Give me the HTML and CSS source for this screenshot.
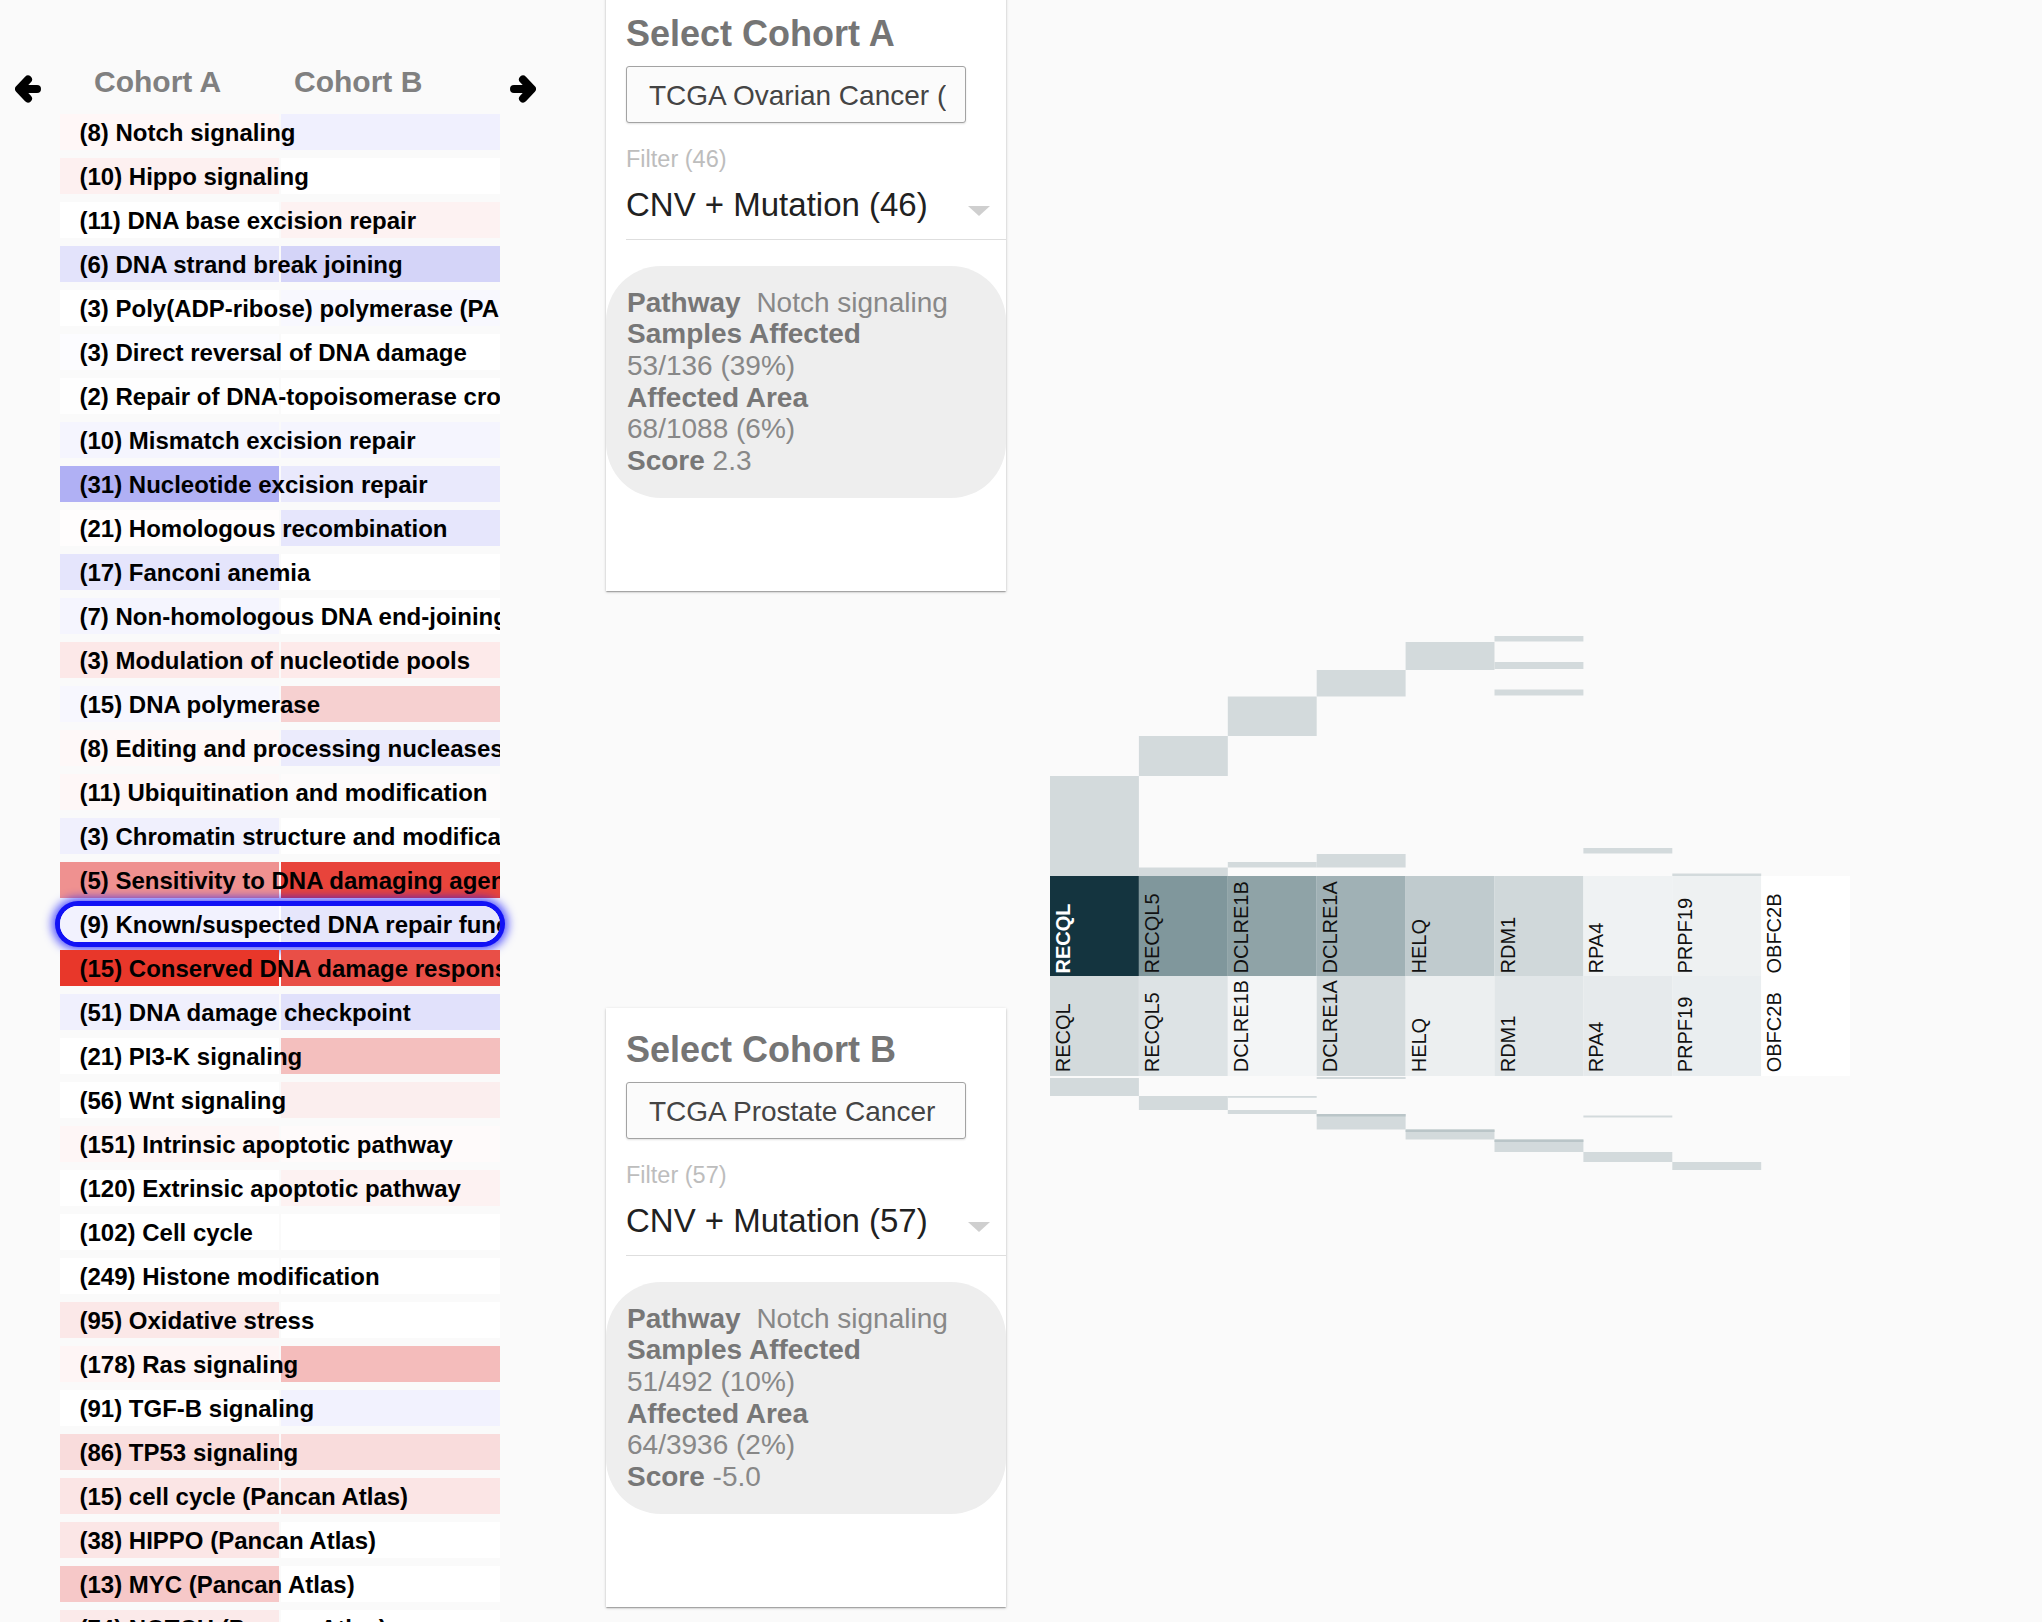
FILE: index.html
```html
<!DOCTYPE html>
<html lang="en">
<head>
<meta charset="utf-8">
<title>Pathway Comparison</title>
<link rel="stylesheet" href="styles.css">
</head>
<body>
<div class="app">
  <section class="pathways">
    <header class="pw-head">
      <svg class="arrow" viewBox="0 0 26 28" aria-label="previous"><path d="M22 14H4.5M13 4.5L4 14L13 23.5"/></svg>
      <span class="pw-head-label pw-head-label--a">Cohort A</span>
      <span class="pw-head-label pw-head-label--b">Cohort B</span>
      <svg class="arrow" viewBox="0 0 26 28" aria-label="next"><path d="M4 14H21.5M13 4.5L22 14L13 23.5"/></svg>
    </header>
    <ul class="pw-list">
      <li class="pw-row"><span class="pw-cell" style="background:#fff7f7"></span><span class="pw-cell" style="background:#f0f0fe"></span><span class="pw-label">(8) Notch signaling</span></li>
      <li class="pw-row"><span class="pw-cell" style="background:#fdf0f0"></span><span class="pw-cell" style="background:#ffffff"></span><span class="pw-label">(10) Hippo signaling</span></li>
      <li class="pw-row"><span class="pw-cell" style="background:#ffffff"></span><span class="pw-cell" style="background:#fdf2f2"></span><span class="pw-label">(11) DNA base excision repair</span></li>
      <li class="pw-row"><span class="pw-cell" style="background:#e3e3fb"></span><span class="pw-cell" style="background:#d4d4f8"></span><span class="pw-label">(6) DNA strand break joining</span></li>
      <li class="pw-row"><span class="pw-cell" style="background:#ffffff"></span><span class="pw-cell" style="background:#f8f8fe"></span><span class="pw-label">(3) Poly(ADP-ribose) polymerase (PARP) enzymes</span></li>
      <li class="pw-row"><span class="pw-cell" style="background:#fcfcff"></span><span class="pw-cell" style="background:#ffffff"></span><span class="pw-label">(3) Direct reversal of DNA damage</span></li>
      <li class="pw-row"><span class="pw-cell" style="background:#fefefe"></span><span class="pw-cell" style="background:#ffffff"></span><span class="pw-label">(2) Repair of DNA-topoisomerase crosslinks</span></li>
      <li class="pw-row"><span class="pw-cell" style="background:#f5f5fe"></span><span class="pw-cell" style="background:#f5f5fe"></span><span class="pw-label">(10) Mismatch excision repair</span></li>
      <li class="pw-row"><span class="pw-cell" style="background:#b0b0f4"></span><span class="pw-cell" style="background:#e9e9fc"></span><span class="pw-label">(31) Nucleotide excision repair</span></li>
      <li class="pw-row"><span class="pw-cell" style="background:#fffdfd"></span><span class="pw-cell" style="background:#e6e6fc"></span><span class="pw-label">(21) Homologous recombination</span></li>
      <li class="pw-row"><span class="pw-cell" style="background:#e5e5fc"></span><span class="pw-cell" style="background:#ffffff"></span><span class="pw-label">(17) Fanconi anemia</span></li>
      <li class="pw-row"><span class="pw-cell" style="background:#f5f5fe"></span><span class="pw-cell" style="background:#ffffff"></span><span class="pw-label">(7) Non-homologous DNA end-joining</span></li>
      <li class="pw-row"><span class="pw-cell" style="background:#fce8e8"></span><span class="pw-cell" style="background:#fdeaea"></span><span class="pw-label">(3) Modulation of nucleotide pools</span></li>
      <li class="pw-row"><span class="pw-cell" style="background:#f7f7fe"></span><span class="pw-cell" style="background:#f6d0d0"></span><span class="pw-label">(15) DNA polymerase</span></li>
      <li class="pw-row"><span class="pw-cell" style="background:#fef8f8"></span><span class="pw-cell" style="background:#ebebfc"></span><span class="pw-label">(8) Editing and processing nucleases</span></li>
      <li class="pw-row"><span class="pw-cell" style="background:#fef7f7"></span><span class="pw-cell" style="background:#fdfbfb"></span><span class="pw-label">(11) Ubiquitination and modification</span></li>
      <li class="pw-row"><span class="pw-cell" style="background:#f0f0fd"></span><span class="pw-cell" style="background:#ffffff"></span><span class="pw-label">(3) Chromatin structure and modification</span></li>
      <li class="pw-row"><span class="pw-cell" style="background:#ef9190"></span><span class="pw-cell" style="background:#e8443b"></span><span class="pw-label">(5) Sensitivity to DNA damaging agents</span></li>
      <li class="pw-row is-selected"><span class="pw-cell" style="background:#f2f2fe"></span><span class="pw-cell" style="background:#e6e6fb"></span><span class="pw-label">(9) Known/suspected DNA repair function</span></li>
      <li class="pw-row"><span class="pw-cell" style="background:#e8372a"></span><span class="pw-cell" style="background:#e94f47"></span><span class="pw-label">(15) Conserved DNA damage response</span></li>
      <li class="pw-row"><span class="pw-cell" style="background:#f0f0fd"></span><span class="pw-cell" style="background:#e1e1fb"></span><span class="pw-label">(51) DNA damage checkpoint</span></li>
      <li class="pw-row"><span class="pw-cell" style="background:#ffffff"></span><span class="pw-cell" style="background:#f4bfbe"></span><span class="pw-label">(21) PI3-K signaling</span></li>
      <li class="pw-row"><span class="pw-cell" style="background:#ffffff"></span><span class="pw-cell" style="background:#fbeeee"></span><span class="pw-label">(56) Wnt signaling</span></li>
      <li class="pw-row"><span class="pw-cell" style="background:#fef6f6"></span><span class="pw-cell" style="background:#fefafa"></span><span class="pw-label">(151) Intrinsic apoptotic pathway</span></li>
      <li class="pw-row"><span class="pw-cell" style="background:#ffffff"></span><span class="pw-cell" style="background:#fdf2f2"></span><span class="pw-label">(120) Extrinsic apoptotic pathway</span></li>
      <li class="pw-row"><span class="pw-cell" style="background:#ffffff"></span><span class="pw-cell" style="background:#ffffff"></span><span class="pw-label">(102) Cell cycle</span></li>
      <li class="pw-row"><span class="pw-cell" style="background:#ffffff"></span><span class="pw-cell" style="background:#ffffff"></span><span class="pw-label">(249) Histone modification</span></li>
      <li class="pw-row"><span class="pw-cell" style="background:#fbe8e8"></span><span class="pw-cell" style="background:#ffffff"></span><span class="pw-label">(95) Oxidative stress</span></li>
      <li class="pw-row"><span class="pw-cell" style="background:#fef5f5"></span><span class="pw-cell" style="background:#f4bcbb"></span><span class="pw-label">(178) Ras signaling</span></li>
      <li class="pw-row"><span class="pw-cell" style="background:#ffffff"></span><span class="pw-cell" style="background:#f2f2fe"></span><span class="pw-label">(91) TGF-B signaling</span></li>
      <li class="pw-row"><span class="pw-cell" style="background:#f9dcdc"></span><span class="pw-cell" style="background:#f9dcdc"></span><span class="pw-label">(86) TP53 signaling</span></li>
      <li class="pw-row"><span class="pw-cell" style="background:#fbe5e5"></span><span class="pw-cell" style="background:#fbe5e5"></span><span class="pw-label">(15) cell cycle (Pancan Atlas)</span></li>
      <li class="pw-row"><span class="pw-cell" style="background:#fbe6e6"></span><span class="pw-cell" style="background:#ffffff"></span><span class="pw-label">(38) HIPPO (Pancan Atlas)</span></li>
      <li class="pw-row"><span class="pw-cell" style="background:#f6c8c8"></span><span class="pw-cell" style="background:#ffffff"></span><span class="pw-label">(13) MYC (Pancan Atlas)</span></li>
      <li class="pw-row"><span class="pw-cell" style="background:#fbeaea"></span><span class="pw-cell" style="background:#ffffff"></span><span class="pw-label">(74) NOTCH (Pancan Atlas)</span></li>
    </ul>
  </section>

  <section class="cohorts">
    <div class="card">
      <h2 class="card-title">Select Cohort A</h2>
      <div class="cohort-input"><span class="cohort-input-text">TCGA Ovarian Cancer (OV)</span></div>
      <div class="filter-label">Filter (46)</div>
      <div class="filter-select"><span class="filter-value">CNV + Mutation (46)</span><span class="caret"></span></div>
      <div class="info">
        <div><b class="info-key">Pathway</b> Notch signaling</div>
        <div><b>Samples Affected</b></div>
        <div>53/136 (39%)</div>
        <div><b>Affected Area</b></div>
        <div>68/1088 (6%)</div>
        <div><b>Score</b> 2.3</div>
      </div>
    </div>
    <div class="card">
      <h2 class="card-title">Select Cohort B</h2>
      <div class="cohort-input"><span class="cohort-input-text">TCGA Prostate Cancer</span></div>
      <div class="filter-label">Filter (57)</div>
      <div class="filter-select"><span class="filter-value">CNV + Mutation (57)</span><span class="caret"></span></div>
      <div class="info">
        <div><b class="info-key">Pathway</b> Notch signaling</div>
        <div><b>Samples Affected</b></div>
        <div>51/492 (10%)</div>
        <div><b>Affected Area</b></div>
        <div>64/3936 (2%)</div>
        <div><b>Score</b> -5.0</div>
      </div>
    </div>
  </section>

  <section class="genes">
    <svg class="heatmap" viewBox="1040 630 820 560" width="820" height="560">
      <g class="bar">
        <rect x="1050" y="776" width="88.9" height="100"/>
        <rect x="1138.9" y="736" width="88.9" height="40"/>
        <rect x="1138.9" y="867.5" width="88.9" height="8.5"/>
        <rect x="1227.8" y="696.5" width="88.9" height="39.5"/>
        <rect x="1227.8" y="862" width="88.9" height="5.5"/>
        <rect x="1316.7" y="670" width="88.9" height="26.5"/>
        <rect x="1316.7" y="854" width="88.9" height="13.5"/>
        <rect x="1405.6" y="642" width="88.9" height="28"/>
        <rect x="1494.5" y="636" width="88.9" height="5.5"/>
        <rect x="1494.5" y="662" width="88.9" height="7"/>
        <rect x="1494.5" y="689.5" width="88.9" height="6"/>
        <rect x="1583.4" y="848" width="88.9" height="5.5"/>
        <rect x="1672.3" y="873.5" width="88.9" height="2.5"/>

        <rect x="1050" y="1078" width="88.9" height="18"/>
        <rect x="1138.9" y="1096" width="88.9" height="14"/>
        <rect x="1227.8" y="1096" width="88.9" height="1.8"/>
        <rect x="1227.8" y="1110" width="88.9" height="4"/>
        <rect x="1316.7" y="1077" width="88.9" height="2"/>
        <rect x="1316.7" y="1114" width="88.9" height="15.5"/>
        <rect x="1405.6" y="1129.5" width="88.9" height="10"/>
        <rect x="1494.5" y="1139.5" width="88.9" height="12.5"/>
        <rect x="1583.4" y="1115.5" width="88.9" height="2"/>
        <rect x="1583.4" y="1152" width="88.9" height="10"/>
        <rect x="1672.3" y="1162" width="88.9" height="8"/>
      </g>
      <g class="bar-edge">
        <rect x="1316.7" y="1114" width="88.9" height="2.5"/>
        <rect x="1405.6" y="1129.5" width="88.9" height="2.5"/>
        <rect x="1494.5" y="1139.5" width="88.9" height="2.5"/>
      </g>

      <rect x="1050" y="876" width="88.9" height="100" fill="#14343f"/>
      <rect x="1138.9" y="876" width="88.9" height="100" fill="#80979c"/>
      <rect x="1227.8" y="876" width="88.9" height="100" fill="#8fa3a7"/>
      <rect x="1316.7" y="876" width="88.9" height="100" fill="#a0b1b5"/>
      <rect x="1405.6" y="876" width="88.9" height="100" fill="#c0cbce"/>
      <rect x="1494.5" y="876" width="88.9" height="100" fill="#d0d8da"/>
      <rect x="1583.4" y="876" width="88.9" height="100" fill="#eff2f3"/>
      <rect x="1672.3" y="876" width="88.9" height="100" fill="#eef1f2"/>
      <rect x="1761.2" y="876" width="88.9" height="100" fill="#ffffff"/>

      <rect x="1050" y="976" width="88.9" height="100" fill="#d3dadc"/>
      <rect x="1138.9" y="976" width="88.9" height="100" fill="#dde3e5"/>
      <rect x="1227.8" y="976" width="88.9" height="100" fill="#f3f5f6"/>
      <rect x="1316.7" y="976" width="88.9" height="100" fill="#d4dbdd"/>
      <rect x="1405.6" y="976" width="88.9" height="100" fill="#eceff0"/>
      <rect x="1494.5" y="976" width="88.9" height="100" fill="#e1e6e8"/>
      <rect x="1583.4" y="976" width="88.9" height="100" fill="#e6eaec"/>
      <rect x="1672.3" y="976" width="88.9" height="100" fill="#eaeef0"/>
      <rect x="1761.2" y="976" width="88.9" height="100" fill="#ffffff"/>

      <g class="gene-label">
        <text class="gene-label--strong" transform="translate(1070 973.5) rotate(-90)">RECQL</text>
        <text transform="translate(1158.9 973.5) rotate(-90)">RECQL5</text>
        <text transform="translate(1247.8 973.5) rotate(-90)">DCLRE1B</text>
        <text transform="translate(1336.7 973.5) rotate(-90)">DCLRE1A</text>
        <text transform="translate(1425.6 973.5) rotate(-90)">HELQ</text>
        <text transform="translate(1514.5 973.5) rotate(-90)">RDM1</text>
        <text transform="translate(1603.4 973.5) rotate(-90)">RPA4</text>
        <text transform="translate(1692.3 973.5) rotate(-90)">PRPF19</text>
        <text transform="translate(1781.2 973.5) rotate(-90)">OBFC2B</text>

        <text transform="translate(1070 1072.3) rotate(-90)">RECQL</text>
        <text transform="translate(1158.9 1072.3) rotate(-90)">RECQL5</text>
        <text transform="translate(1247.8 1072.3) rotate(-90)">DCLRE1B</text>
        <text transform="translate(1336.7 1072.3) rotate(-90)">DCLRE1A</text>
        <text transform="translate(1425.6 1072.3) rotate(-90)">HELQ</text>
        <text transform="translate(1514.5 1072.3) rotate(-90)">RDM1</text>
        <text transform="translate(1603.4 1072.3) rotate(-90)">RPA4</text>
        <text transform="translate(1692.3 1072.3) rotate(-90)">PRPF19</text>
        <text transform="translate(1781.2 1072.3) rotate(-90)">OBFC2B</text>
      </g>
    </svg>
  </section>
</div>
</body>
</html>
```
FILE: styles.css
```css
html, body {
  margin: 0;
  padding: 0;
  background: #fafafa;
  overflow: hidden;
  font-family: "Liberation Sans", Arial, sans-serif;
}

.app {
  display: flex;
  align-items: flex-start;
  height: 100vh;
  overflow: hidden;
}

/* ---------- pathway list ---------- */
.pathways {
  flex: none;
  width: 560px;
}

.pw-head {
  display: flex;
  align-items: flex-start;
  height: 114px;
  box-sizing: border-box;
  padding: 64px 0 0 15px;
}

.arrow {
  flex: none;
  width: 26px;
  height: 28px;
  margin-top: 11px;
  fill: none;
  stroke: #000;
  stroke-width: 8;
  stroke-linecap: round;
  stroke-linejoin: round;
}

.pw-head-label {
  flex: none;
  font-weight: bold;
  font-size: 30px;
  line-height: 36px;
  color: #808080;
}

.pw-head-label--a {
  margin-left: 53px;
  width: 200px;
}

.pw-head-label--b {
  width: 216px;
}

.pw-list {
  list-style: none;
  margin: 0 0 0 60px;
  padding: 0;
  width: 440px;
  display: flex;
  flex-direction: column;
  gap: 8px;
}

.pw-row {
  display: grid;
  grid-template-columns: 219px 219px;
  column-gap: 2px;
  height: 36px;
  overflow: hidden;
}

.pw-cell {
  grid-row: 1;
}

.pw-cell:first-child {
  grid-column: 1;
}

.pw-cell:nth-child(2) {
  grid-column: 2;
}

.pw-label {
  grid-row: 1;
  grid-column: 1 / -1;
  min-width: 0;
  overflow: hidden;
  white-space: nowrap;
  padding: 1.5px 0 0 19.5px;
  font-weight: bold;
  font-size: 24px;
  line-height: 34.5px;
  color: #000;
}

.pw-row.is-selected {
  background: #fff;
  border-radius: 18px;
  box-shadow: 0 0 0 5px #1212f5, 0 0 10px 8px rgba(10, 10, 255, 0.7);
}

/* ---------- cohort cards ---------- */
.cohorts {
  flex: none;
  width: 400px;
  margin-left: 46px;
  margin-top: -8px;
  display: flex;
  flex-direction: column;
  gap: 417px;
}

.card {
  height: 599px;
  box-sizing: border-box;
  padding: 21px 0 0 20px;
  background: #fff;
  box-shadow: 0 1px 3px rgba(0, 0, 0, 0.2), 0 1px 1px rgba(0, 0, 0, 0.14), 0 2px 1px -1px rgba(0, 0, 0, 0.12);
}

.card-title {
  margin: 0;
  font-weight: bold;
  font-size: 36px;
  line-height: 42px;
  color: #757575;
}

.cohort-input {
  margin-top: 11px;
  width: 340px;
  height: 57px;
  box-sizing: border-box;
  border: 1px solid #a3a3a3;
  border-radius: 3px;
  padding: 3px 19px 0 22px;
  background: #fbfbfb;
  box-shadow: 0 1px 2px rgba(0, 0, 0, 0.12);
  font-size: 28px;
  line-height: 52px;
  color: #444;
}

.cohort-input-text {
  display: block;
  overflow: hidden;
  white-space: nowrap;
}

.filter-label {
  margin-top: 22px;
  font-size: 23.5px;
  line-height: 28px;
  color: #bdbdbd;
}

.filter-select {
  margin-top: 11.6px;
  display: flex;
  justify-content: space-between;
  align-items: flex-start;
  padding-bottom: 14px;
  border-bottom: 1px solid #dedede;
}

.filter-value {
  font-size: 33px;
  line-height: 40px;
  color: #212121;
}

.caret {
  width: 0;
  height: 0;
  margin: 21px 16px 0 0;
  border-left: 11px solid transparent;
  border-right: 11px solid transparent;
  border-top: 10px solid #cfcfcf;
}

.info {
  margin: 26.5px 0 0 -20px;
  padding: 20.5px 20px 21px 21px;
  background: #eeeeee;
  border-radius: 55px;
  font-size: 28px;
  line-height: 31.7px;
  color: #888;
}

.info b {
  color: #777;
}

.info-key {
  margin-right: 8px;
}

/* ---------- gene heatmap ---------- */
.genes {
  flex: none;
  margin-left: 34px;
  margin-top: 630px;
}

.heatmap {
  display: block;
}

.bar rect {
  fill: #d3dadc;
}

.bar-edge rect {
  fill: #bac5c8;
}

.gene-label text {
  font-family: "Liberation Sans", Arial, sans-serif;
  font-size: 20px;
  fill: #111;
}

.gene-label .gene-label--strong {
  font-weight: bold;
  fill: #fff;
}
```
